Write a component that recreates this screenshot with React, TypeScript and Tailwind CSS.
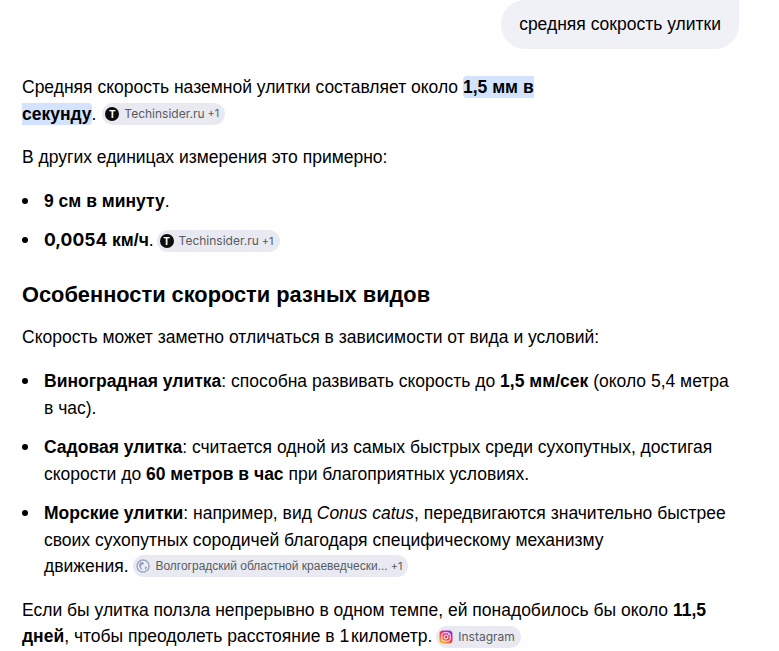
import React from "react";

function TIcon() {
  return (
    <span className="w-[14px] h-[14px] rounded-full bg-[#0b0b0b] text-white inline-flex items-center justify-center text-[10px] font-bold leading-none shrink-0">T</span>
  );
}

function GlobeIcon() {
  return (
    <svg width="14" height="14" viewBox="0 0 14 14" className="shrink-0">
      <circle cx="7" cy="7" r="6" fill="#eef0f8" stroke="#9aa3c7" strokeWidth="1.4" />
      <path d="M4 3.5 C6 2.5 8 3 8 4.5 C8 6 5.5 5.5 5 7 C4.6 8.4 6.5 9 6.5 11 C4.5 10.5 3 8.5 3 6.5 C3 5.3 3.3 4.3 4 3.5 Z" fill="#9aa3c7" />
      <path d="M9.5 7.5 C10.5 7.2 11 7.5 11 8 C10.8 9.2 10 10.2 9 10.8 C8.6 9.5 8.6 8 9.5 7.5 Z" fill="#9aa3c7" />
    </svg>
  );
}

function InstaIcon() {
  return (
    <svg width="14" height="14" viewBox="0 0 14 14" className="shrink-0">
      <defs>
        <linearGradient id="ig" x1="0.1" y1="1" x2="0.8" y2="0">
          <stop offset="0" stopColor="#fdc830" />
          <stop offset="0.45" stopColor="#f0453a" />
          <stop offset="0.75" stopColor="#d6249f" />
          <stop offset="1" stopColor="#7a38d8" />
        </linearGradient>
      </defs>
      <rect x="0.5" y="0.5" width="13" height="13" rx="3.5" fill="url(#ig)" />
      <rect x="2.8" y="2.8" width="8.4" height="8.4" rx="2.4" fill="none" stroke="#fff" strokeWidth="1" />
      <circle cx="7" cy="7" r="2" fill="none" stroke="#fff" strokeWidth="1" />
      <circle cx="9.6" cy="4.4" r="0.6" fill="#fff" />
    </svg>
  );
}

function Chip({ icon, label, extra, font = "font-['Inter',sans-serif]", cls = "-top-px" }: { icon: React.ReactNode; label: string; extra?: string; font?: string; cls?: string }) {
  return (
    <span className={"inline-flex items-center align-middle h-[22px] pl-[3px] pr-[6px] gap-[5px] rounded-full bg-[#e9eaf1] text-[#575b5f] text-[12px] leading-none relative " + font + " " + cls}>
      {icon}
      <span className="whitespace-nowrap">{label}</span>
      {extra && <span className="whitespace-nowrap text-[11px] -ml-[2px] font-['Inter',sans-serif]">{extra}</span>}
    </span>
  );
}

function Li({ first, children }: { first?: boolean; children: React.ReactNode }) {
  return (
    <li className={first ? "flex" : "flex mt-[13px]"}>
      <span className="w-[22px] shrink-0 pt-[10px]">
        <span className="block w-[6px] h-[6px] rounded-full bg-black"></span>
      </span>
      <div className="min-w-0">{children}</div>
    </li>
  );
}

export default function App() {
  return (
    <div className="w-[779px] h-[651px] overflow-hidden bg-white text-[#000] font-['Liberation_Sans',sans-serif] text-[17.5px] leading-[26.5px]">
      <div className="flex justify-end pr-[40px]">
        <div className="h-[49px] px-[18px] flex items-center bg-[#f0f1f6] rounded-b-[24px] rounded-tl-[24px]">
          средняя сокрость улитки
        </div>
      </div>
      <div className="pl-[22px] pr-[40px] pt-[25px]">
        <p>
          Средняя скорость наземной улитки составляет около{" "}
          <b className="font-bold bg-[#d3e3fd] rounded-l-[4px] py-[1px]">1,5 мм в</b>{" "}
          <span className="whitespace-nowrap">
            <b className="font-bold bg-[#d3e3fd] rounded-r-[4px] py-[1px]">секунду</b>.{" "}
            <Chip icon={<TIcon />} label="Techinsider.ru" extra="+1" cls="-top-px ml-px" />
          </span>
        </p>
        <p className="mt-[17px]">В других единицах измерения это примерно:</p>
        <ul className="mt-[17px]">
          <Li first><b className="font-bold">9 см в минуту</b>.</Li>
          <Li>
            <b className="font-bold"><span className="font-['Inter',sans-serif] text-[17.5px]">0,0054</span> км/ч</b>.{" "}
            <Chip icon={<TIcon />} label="Techinsider.ru" extra="+1" cls="top-0 -ml-[2px]" />
          </Li>
        </ul>
        <h2 className="mt-[27px] text-[21.8px] leading-[28px] font-bold">Особенности скорости разных видов</h2>
        <p className="mt-[15px]">Скорость может заметно отличаться в зависимости от вида и условий:</p>
        <ul className="mt-[18px]">
          <Li first>
            <b className="font-bold">Виноградная улитка</b>: способна развивать скорость до <b className="font-bold">1,5 мм/сек</b> (около 5,4 метра в час).
          </Li>
          <Li>
            <b className="font-bold">Садовая улитка</b>: считается одной из самых быстрых среди сухопутных, достигая скорости до <b className="font-bold">60 метров в час</b> при благоприятных условиях.
          </Li>
          <Li>
            <b className="font-bold">Морские улитки</b>: например, вид <i>Conus catus</i>, передвигаются значительно быстрее своих сухопутных сородичей благодаря специфическому механизму{" "}
            <span className="whitespace-nowrap">
              движения.{" "}
              <Chip icon={<GlobeIcon />} label="Волгоградский областной краеведчески..." extra="+1" font="font-['Liberation_Sans',sans-serif]" />
            </span>
          </Li>
        </ul>
        <p className="mt-[17px]">
          Если бы улитка ползла непрерывно в одном темпе, ей понадобилось бы около <b className="font-bold">11,5 дней</b>, чтобы преодолеть расстояние в <span className="tracking-[-3px]">1</span> километр.{" "}
          <Chip icon={<InstaIcon />} label="Instagram" cls="top-0 -ml-px" />
        </p>
      </div>
    </div>
  );
}
